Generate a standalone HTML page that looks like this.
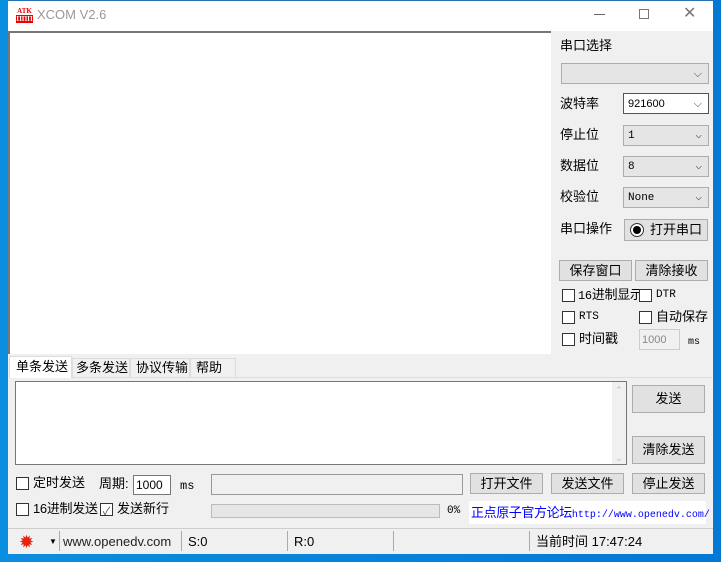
<!DOCTYPE html><html><head><meta charset="utf-8"><style>
*{box-sizing:border-box;margin:0;padding:0;line-height:16px}
body{width:721px;height:562px;background:linear-gradient(90deg,#0a8ee0,#0378d4);position:relative;overflow:hidden;font-family:"Liberation Sans","Noto Sans CJK SC",sans-serif;font-size:12px;color:#000}
.a{position:absolute}
.win{left:8px;top:0;width:705px;height:554px;background:#f0f0f0;border-top:1px solid #2a6fb0}
.tb{left:8px;top:1px;width:705px;height:30px;background:#fff}
.mono{font-family:"Liberation Mono","Noto Sans CJK SC",monospace}
.cb{width:13px;height:13px;border:1px solid #333;background:#fff}
.btn{background:#e1e1e1;border:1px solid #adadad;font-size:13px;display:flex;align-items:center;justify-content:center}
.sel{border:1px solid #adadad;background:#e5e5e5;height:21px;font-size:11px;padding-left:4px;display:flex;align-items:center}
.sel:after{content:"⌵";position:absolute;right:6px;top:2px;font-size:11px;color:#444}
.lb{font-size:13px;white-space:nowrap}
</style></head><body>
<div class="a win"></div>
<div class="a tb"></div>
<div class="a" style="left:16px;top:7px;width:17px;height:16px;font:bold 7px 'Liberation Serif',serif;color:#e00;line-height:8px;text-align:center"><span style="line-height:8px">ATK</span><br><span style="background:#e00;color:#fff;line-height:8px">ΠΠΠ</span></div>
<div class="a" style="left:37px;top:7px;font-size:13px;color:#999">XCOM V2.6</div>
<div class="a" style="left:594px;top:14px;width:11px;height:1px;background:#666"></div>
<div class="a" style="left:639px;top:9px;width:10px;height:10px;border:1px solid #777"></div>
<div class="a" style="left:683px;top:6px;font-size:16px;color:#777">✕</div>
<div class="a" style="left:8px;top:31px;width:543px;height:323px;background:#fff;border-top:2px solid #777;border-left:2px solid #777"></div>
<div class="a lb" style="left:560px;top:38px">串口选择</div>
<div class="a sel" style="left:561px;top:63px;width:148px"></div>
<div class="a lb" style="left:560px;top:96px">波特率</div>
<div class="a sel" style="left:623px;top:93px;width:86px;background:#fff;border-color:#555">921600</div>
<div class="a lb" style="left:560px;top:127px">停止位</div>
<div class="a sel mono" style="left:623px;top:125px;width:86px">1</div>
<div class="a lb" style="left:560px;top:158px">数据位</div>
<div class="a sel mono" style="left:623px;top:156px;width:86px">8</div>
<div class="a lb" style="left:560px;top:189px">校验位</div>
<div class="a sel mono" style="left:623px;top:187px;width:86px">None</div>
<div class="a lb" style="left:560px;top:221px">串口操作</div>
<div class="a btn" style="left:624px;top:219px;width:84px;height:22px;padding-left:20px">打开串口</div>
<div class="a" style="left:630px;top:223px;width:14px;height:14px;border-radius:50%;border:1px solid #333;background:#fff"></div>
<div class="a" style="left:633px;top:226px;width:8px;height:8px;border-radius:50%;background:#000"></div>
<div class="a btn" style="left:559px;top:260px;width:73px;height:21px">保存窗口</div>
<div class="a btn" style="left:635px;top:260px;width:73px;height:21px">清除接收</div>
<div class="a cb" style="left:562px;top:289px"></div><div class="a lb" style="left:578px;top:287px;letter-spacing:-0.3px"><span class="mono" style="font-size:12px">16</span>进制显示</div>
<div class="a cb" style="left:639px;top:289px"></div><div class="a mono" style="left:656px;top:287px;font-size:11px">DTR</div>
<div class="a cb" style="left:562px;top:311px"></div><div class="a mono" style="left:579px;top:309px;font-size:11px">RTS</div>
<div class="a cb" style="left:639px;top:311px"></div><div class="a lb" style="left:656px;top:309px">自动保存</div>
<div class="a cb" style="left:562px;top:333px"></div><div class="a lb" style="left:579px;top:331px">时间戳</div>
<div class="a" style="left:639px;top:329px;width:41px;height:21px;border:1px solid #ccc;color:#888;font-size:11px;padding:2px 0 0 2px">1000</div>
<div class="a mono" style="left:688px;top:335px;font-size:10px">ms</div>
<div class="a" style="left:12px;top:377px;width:700px;height:1px;background:#ddd"></div>
<div class="a" style="left:9px;top:356px;width:63px;height:22px;background:#fff;border:1px solid #ddd;border-bottom:none;font-size:13px;padding:2px 0 0 6px">单条发送</div>
<div class="a" style="left:72px;top:358px;width:58px;height:20px;border:1px solid #ddd;font-size:13px;padding:1px 0 0 3px">多条发送</div>
<div class="a" style="left:130px;top:358px;width:60px;height:20px;border:1px solid #ddd;font-size:13px;padding:1px 0 0 5px">协议传输</div>
<div class="a" style="left:190px;top:358px;width:46px;height:20px;border:1px solid #ddd;font-size:13px;padding:1px 0 0 5px">帮助</div>
<div class="a" style="left:15px;top:381px;width:612px;height:84px;background:#fff;border:1px solid #777"></div>
<div class="a" style="left:612px;top:382px;width:14px;height:82px;background:#f0f0f0;color:#bbb;font-size:9px;text-align:center">⌃<div style="margin-top:52px">⌄</div></div>
<div class="a btn" style="left:632px;top:385px;width:73px;height:28px">发送</div>
<div class="a btn" style="left:632px;top:436px;width:73px;height:28px">清除发送</div>
<div class="a cb" style="left:16px;top:477px"></div><div class="a lb" style="left:33px;top:475px">定时发送</div>
<div class="a lb" style="left:99px;top:476px">周期:</div>
<div class="a" style="left:133px;top:475px;width:38px;height:20px;background:#fff;border:1px solid #777;font-size:12px;padding:1px 0 0 2px">1000</div>
<div class="a mono" style="left:180px;top:478px;font-size:12px">ms</div>
<div class="a" style="left:211px;top:474px;width:252px;height:21px;border:1px solid #999;background:#f0f0f0"></div>
<div class="a btn" style="left:470px;top:473px;width:73px;height:21px">打开文件</div>
<div class="a btn" style="left:551px;top:473px;width:73px;height:21px">发送文件</div>
<div class="a btn" style="left:632px;top:473px;width:73px;height:21px">停止发送</div>
<div class="a cb" style="left:16px;top:503px"></div><div class="a lb" style="left:33px;top:501px;letter-spacing:-0.3px">16进制发送</div>
<div class="a cb" style="left:100px;top:503px;font-size:11px;color:#555;text-align:center"><span style="line-height:11px">✓</span></div><div class="a lb" style="left:117px;top:501px">发送新行</div>
<div class="a" style="left:211px;top:504px;width:229px;height:14px;border:1px solid #bbb;background:#e6e6e6"></div>
<div class="a mono" style="left:447px;top:503px;font-size:11px">0%</div>
<div class="a" style="left:469px;top:501px;width:237px;height:23px;background:#fff"></div>
<div class="a" style="left:471px;top:505px;font-size:13px;color:#00f;white-space:nowrap;letter-spacing:-0.4px">正点原子官方论坛<span class="mono" style="font-size:10px;letter-spacing:0">http://www.openedv.com/</span></div>
<div class="a" style="left:8px;top:528px;width:705px;height:1px;background:#ccc"></div>
<div class="a" style="left:19px;top:533px;font-size:18px;color:#e8200c"><span style="line-height:18px">✹</span></div>
<div class="a" style="left:49px;top:534px;font-size:8px">▼</div>
<div class="a" style="left:59px;top:531px;width:1px;height:20px;background:#aaa"></div>
<div class="a" style="left:63px;top:534px;font-size:13px;color:#222">www.openedv.com</div>
<div class="a" style="left:181px;top:531px;width:1px;height:20px;background:#aaa"></div>
<div class="a" style="left:188px;top:534px;font-size:13px">S:0</div>
<div class="a" style="left:287px;top:531px;width:1px;height:20px;background:#aaa"></div>
<div class="a" style="left:294px;top:534px;font-size:13px">R:0</div>
<div class="a" style="left:393px;top:531px;width:1px;height:20px;background:#aaa"></div>
<div class="a" style="left:529px;top:531px;width:1px;height:20px;background:#aaa"></div>
<div class="a" style="left:536px;top:534px;font-size:13px">当前时间 17:47:24</div>
</body></html>
